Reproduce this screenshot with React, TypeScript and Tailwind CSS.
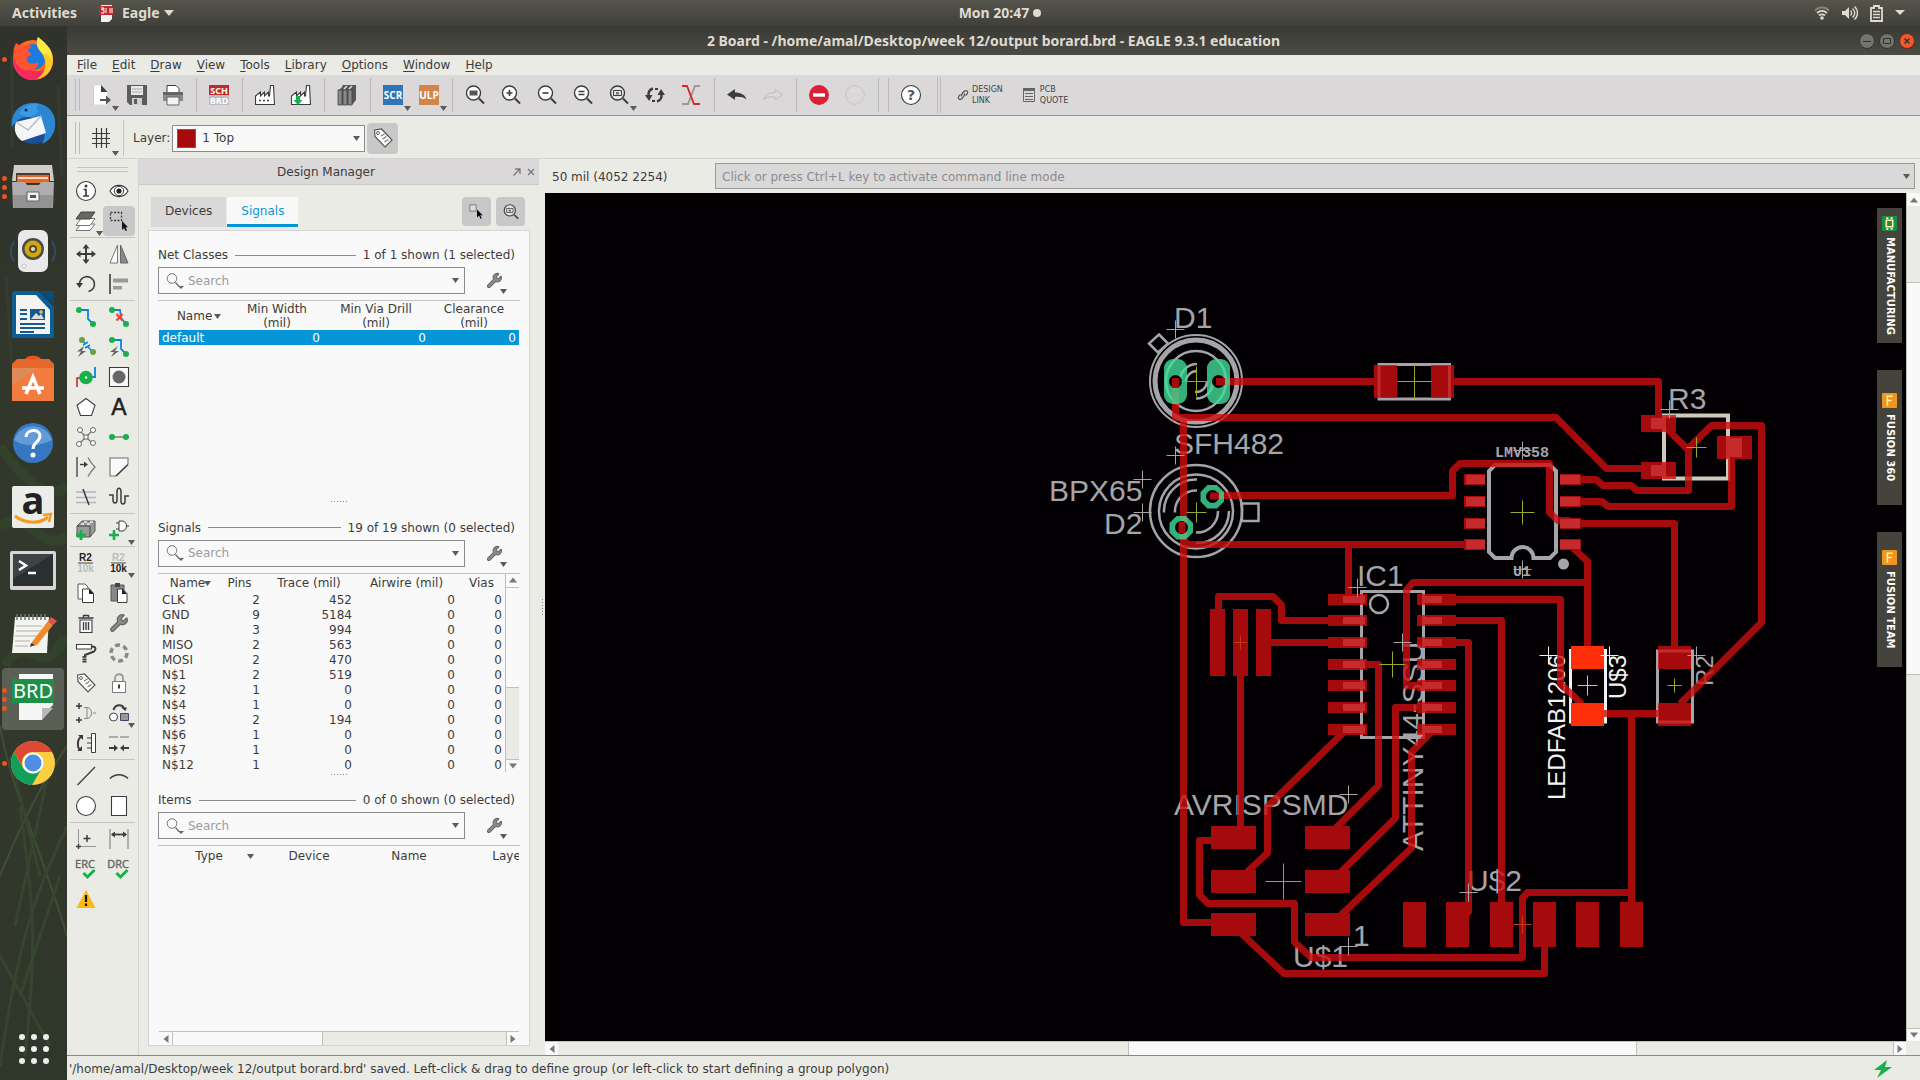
import { ReactNode, useState } from 'react';
import { Wrench } from 'lucide-react';

const INK = '#3c3c3c';
const GREEN = '#17b04b';

/* 20x20 tool glyphs */
const glyphs: Record<string, ReactNode> = {
    open: (
        <>
            <path d="M2 .5h8l6 6v13H2z" fill="#fff" stroke="none" />
            <path d="M10 0l6.500 7H10z" fill={INK} stroke="none" />
            <path d="M2.500 20V.5" stroke="#ccc" strokeWidth="1" />
            <path d="M9 14h6V10.500l5 4.500-5 4.500V16H9z" fill="#555" stroke="none" />
        </>
    ),
    save: (
        <>
            <path d="M0 0h20v20H3l-3-3z" fill="#5c5c5a" stroke="none" />
            <path d="M4 1h12v9H4z" fill="#e8e8e8" stroke="none" />
            <path d="M5 13h10v7H5z" fill="#cfcfcf" stroke="none" />
            <path d="M7 14h3v5H7z" fill="#5c5c5a" stroke="none" />
            <path d="M5 4h10M5 7h10" stroke="#aaa" strokeWidth="1" />
        </>
    ),
    print: (
        <>
            <path d="M4 .5h9l3 3V8H4z" fill="#fff" strokeWidth="1" />
            <path d="M0 7h20v9H0z" fill="#8a8a88" stroke="none" />
            <path d="M0 7h20v3H0z" fill="#666" stroke="none" />
            <path d="M4 12h12v8H4z" fill="#f4f4f4" stroke="#666" strokeWidth="1" />
        </>
    ),
    sch: (
        <>
            <path d="M0 0h20v10H0z" fill="#c4262b" stroke="none" />
            <path d="M0 10h20v10H0z" fill="#bdbdbd" stroke="none" />
            <g fontSize="9" fontWeight="bold" fill="#fff" stroke="none" textAnchor="middle" fontFamily="Open Sans">
                <text x="10" y="8.500">SCH</text>
                <text x="10" y="18.500">BRD</text>
            </g>
        </>
    ),
    cam: (
        <>
            <path d="M.5 19.500V11l5-4v4l4-4v4l4-4v4h1l1-10.500h3l1 19z" fill="#fff" strokeWidth="1.100" />
            <path d="M4 15.500h2M8 15.500h2M12 15.500h2" strokeWidth="1.300" />
        </>
    ),
    camDown: (
        <>
            <path d="M.5 19.500V11l5-4v4l4-4v4l4-4v4h1l1-10.500h3l1 19z" fill="#fff" strokeWidth="1.100" />
            <path d="M5 11h4v4h2.500L7 20l-4.500-5H5z" fill={GREEN} stroke="none" />
        </>
    ),
    library: (
        <>
            <path d="M1 5l5-5h13v15l-4 5H1z" fill="#555" stroke="none" />
            <path d="M1 5h4v15H1zM6 5h4v15H6zM11 5h4v15h-4z" fill="#888" stroke="#444" strokeWidth="0.800" />
            <path d="M2 4l3-3M7 4l3-3M12 4l3-3" stroke="#ddd" strokeWidth="1.500" />
        </>
    ),
    scr: (
        <>
            <path d="M0 0h20v20H0z" fill="#2f75b8" stroke="none" />
            <text x="10" y="14" textAnchor="middle" fontSize="10" fontWeight="bold" fill="#fff" stroke="none" fontFamily="Open Sans">SCR</text>
        </>
    ),
    ulp: (
        <>
            <path d="M0 0h20v20H0z" fill="#d38448" stroke="none" />
            <text x="10" y="14" textAnchor="middle" fontSize="10" fontWeight="bold" fill="#fff" stroke="none" fontFamily="Open Sans">ULP</text>
        </>
    ),
    zoomFit: (
        <>
            <circle cx="8.500" cy="8" r="7" fill="#fff" strokeWidth="1.400" />
            <path d="M4.500 5.500h8v5h-8z" fill="#555" stroke="none" />
            <path d="M14 13.500l5 5" strokeWidth="2" />
        </>
    ),
    zoomIn: (
        <>
            <circle cx="8.500" cy="8" r="7" fill="#fff" strokeWidth="1.400" />
            <path d="M5.500 8h6M8.500 5v6" strokeWidth="1.600" />
            <path d="M14 13.500l5 5" strokeWidth="2" />
        </>
    ),
    zoomOut: (
        <>
            <circle cx="8.500" cy="8" r="7" fill="#fff" strokeWidth="1.400" />
            <path d="M5.500 8h6" strokeWidth="1.600" />
            <path d="M14 13.500l5 5" strokeWidth="2" />
        </>
    ),
    zoomRedraw: (
        <>
            <circle cx="8.500" cy="8" r="7" fill="#fff" strokeWidth="1.400" />
            <path d="M5.500 6.500h6M5.500 9.500h6" strokeWidth="1.400" />
            <path d="M14 13.500l5 5" strokeWidth="2" />
        </>
    ),
    zoomSelect: (
        <>
            <circle cx="8.500" cy="8" r="7" fill="#e4e4e4" strokeWidth="1.400" />
            <path d="M4.500 5.500h8v5h-8z" strokeWidth="1" />
            <path d="M7 7h3v2.500H7z" fill="#777" stroke="none" />
            <path d="M14 13.500l5 5" strokeWidth="2" />
        </>
    ),
    refresh: (
        <>
            <path d="M8 3.500C4.500 4.500 3 7.500 3.500 11.500M12 16.500c3.500-1 5-4 4.500-8" strokeWidth="2.400" />
            <path d="M0 10h7.500L4 16zM20 10h-7.500L16 4z" fill={INK} stroke="none" />
            <path d="M10 4h3M7 16h3" strokeWidth="2" />
        </>
    ),
    ratsnest: (
        <>
            <path d="M19 1h-5L7 19H1" stroke="#999" strokeWidth="1.800" />
            <path d="M1 1h5l7 18h6" stroke="#d8262c" strokeWidth="1.800" />
        </>
    ),
    undo: <path d="M0 9.500L8 4v3.500c6 0 10 2 11.500 7-3-2.500-7-3-11.500-2.500v3z" fill={INK} stroke="none" />,
    redo: <path d="M19.500 9.500L12 4.500v3C6 7.500 2 9.500.5 14.500c3-2.500 7-3 11.500-2.500v3z" stroke="#bcbcbc" strokeWidth="1" />,
    stop: (
        <>
            <circle cx="10" cy="10" r="10" fill="#db2035" stroke="none" />
            <path d="M4 10h12" stroke="#fff" strokeWidth="3.400" />
        </>
    ),
    idle: (
        <>
            <circle cx="10" cy="10" r="9.300" stroke="#c6c6c6" strokeWidth="1" />
            <path d="M8 6h1M12 6h1M8 13h1M12 13h1" stroke="#eee" strokeWidth="1" />
        </>
    ),
    help: (
        <>
            <circle cx="10" cy="10" r="9.500" fill="#fff" strokeWidth="1.100" />
            <text x="10" y="15" textAnchor="middle" fontSize="14" fontWeight="bold" fill="#555" stroke="none">?</text>
        </>
    ),
    grid: <path d="M5.500 0v20M10.500 0v20M15.500 0v20M1 5.500h18M1 10.500h18M1 15.500h18" strokeWidth="1.200" />,
    tag: (
        <>
            <path d="M1.500 2l7-1L19 12l-7 7L2 8.500z" fill="#fff" stroke="#555" strokeWidth="1.200" />
            <circle cx="5" cy="5" r="1.500" stroke="#666" strokeWidth="1" />
            <path d="M8 8l3.500-2M9.500 11l4-2.500M11.500 14l4-2.500" stroke="#777" strokeWidth="1.200" />
        </>
    ),
    info: (
        <>
            <circle cx="10" cy="10" r="9.500" fill="#fff" strokeWidth="1.100" />
            <path d="M7.500 8.500H10V15M7 15h6" strokeWidth="1.700" />
            <circle cx="10" cy="5" r="1.500" fill={INK} stroke="none" />
        </>
    ),
    eye: (
        <>
            <path d="M1 10c4-7.500 14-7.500 18 0-4 7.500-14 7.500-18 0z" fill="#fff" strokeWidth="1.100" />
            <circle cx="10" cy="10" r="4.700" strokeWidth="1" />
            <circle cx="10" cy="10" r="2.600" fill="#222" stroke="none" />
        </>
    ),
    layers: (
        <>
            <path d="M5 13h14l-5 6.500H0z" fill="#fff" stroke="#777" strokeWidth="1" />
            <path d="M5 7.500h14l-5 7H0z" fill="#fff" stroke="#777" strokeWidth="1" />
            <path d="M5 1h14l-5 7H0z" fill="#666" stroke="#444" strokeWidth="1" />
        </>
    ),
    group: (
        <>
            <path d="M1.500 1.500h11v8h-11z" strokeWidth="1.300" strokeDasharray="2 1.500" />
            <path d="M13 10v9l2-2 1.500 3 1.500-.7-1.500-3H19z" fill="#111" stroke="none" />
        </>
    ),
    move: (
        <>
            <path d="M10 2v16M2 10h16" strokeWidth="2" />
            <path d="M10 0l3.500 4.500h-7zM10 20l3.500-4.500h-7zM0 10l4.500-3.500v7zM20 10l-4.500-3.500v7z" fill={INK} stroke="none" />
        </>
    ),
    mirror: (
        <>
            <path d="M8.500 1v18H1z" fill="#fff" stroke="#777" strokeWidth="1" />
            <path d="M11.500 1v18H19z" fill="#888" stroke="#666" strokeWidth="1" />
        </>
    ),
    rotate: (
        <>
            <path d="M3.500 11a7.500 7.500 0 1 1 9 6.500" strokeWidth="1.600" />
            <path d="M0 9h7l-3.500 5z" fill={INK} stroke="none" />
        </>
    ),
    align: (
        <>
            <path d="M1 0v20" strokeWidth="1.600" />
            <path d="M4 4.500h15v4H4zM4 12h9v3.500H4z" fill="#999" stroke="none" />
        </>
    ),
    route: (
        <>
            <path d="M3 3h9v9l5 5" stroke="#0a84e0" strokeWidth="1.800" />
            <circle cx="3" cy="3" r="3" fill={GREEN} stroke="none" />
            <circle cx="17" cy="17" r="3" fill={GREEN} stroke="none" />
        </>
    ),
    ripup: (
        <>
            <path d="M3 3h8l1 8 5 6" stroke="#0a84e0" strokeWidth="1.800" />
            <circle cx="3" cy="3" r="3" fill={GREEN} stroke="none" />
            <circle cx="17" cy="17" r="3" fill={GREEN} stroke="none" />
            <path d="M7.500 7l6 6.500M13.500 7l-6 6.500" stroke="#ff3b28" strokeWidth="2.200" />
        </>
    ),
    fanout: (
        <>
            <path d="M5 2l4 4.500M12 10l5 5M7 8l5-3M9 11l5-3" stroke="#0a84e0" strokeWidth="1.600" />
            <circle cx="6" cy="3" r="3" fill="#6d9e45" stroke="none" />
            <circle cx="17" cy="15" r="3" fill="#6d9e45" stroke="none" />
            <path d="M8 9l-7 5.500h4L2 20l8-6H6z" fill="#666" stroke="none" />
        </>
    ),
    autoroute: (
        <>
            <path d="M3 3h9v9l5 5" stroke="#0a84e0" strokeWidth="1.800" />
            <circle cx="3" cy="3" r="3" fill={GREEN} stroke="none" />
            <circle cx="17" cy="17" r="3" fill={GREEN} stroke="none" />
            <path d="M9 9l-8 6h4l-3 5 8-6H6z" fill="#666" stroke="none" />
        </>
    ),
    via: (
        <>
            <path d="M1 20V11h6" stroke="#b5282c" strokeWidth="1.500" />
            <path d="M19 0v10h-5" stroke="#0a84e0" strokeWidth="1.800" />
            <circle cx="10" cy="10.500" r="6.800" fill={GREEN} stroke="none" />
            <circle cx="10" cy="10.500" r="1.200" fill="#fff" stroke="none" />
        </>
    ),
    hole: (
        <>
            <path d="M.5 .5h19v19H.5z" fill="#fafafa" strokeWidth="1.100" />
            <circle cx="10" cy="10" r="6.500" fill="#666" stroke="none" />
        </>
    ),
    polygon: <path d="M10 1.500l9 6.700-3.500 10.300h-11L1 8.200z" fill="#fff" strokeWidth="1.100" />,
    text: <text x="10" y="18" textAnchor="middle" fontSize="23" fill="#222" stroke="#222" strokeWidth="0.500" fontFamily="Liberation Sans">A</text>,
    star: (
        <>
            <path d="M4 4l12 12M16 4L4 16" stroke="#777" strokeWidth="1.300" />
            <g fill="#fff" stroke="#666" strokeWidth="1">
                <circle cx="4" cy="3" r="2.500" />
                <circle cx="17" cy="3" r="2.500" />
                <circle cx="3" cy="17" r="2.500" />
                <circle cx="17" cy="16" r="2.500" />
                <path d="M8 8h4v4H8z" />
            </g>
        </>
    ),
    airwire: (
        <>
            <path d="M3 10h14" stroke="#888" strokeWidth="1.600" />
            <circle cx="3" cy="10" r="3" fill={GREEN} stroke="none" />
            <circle cx="17" cy="10" r="3" fill={GREEN} stroke="none" />
        </>
    ),
    split: (
        <>
            <path d="M1 0v20" strokeWidth="1.300" />
            <path d="M12 .5c2 4 4 7 7 9.500-3 3-5 6-7 9.500" stroke="#777" strokeWidth="1.300" />
            <path d="M4 7.500h6" strokeWidth="1.400" />
            <path d="M8 4.500l4 3-4 3z" fill={INK} stroke="none" />
        </>
    ),
    miter: (
        <>
            <path d="M1 1h18v7L7 19H1z" fill="#fafafa" stroke="none" />
            <path d="M19 7V1H1v18h6" stroke="#999" strokeWidth="1.600" />
            <path d="M19 7.500L7 19" strokeWidth="1.600" />
        </>
    ),
    slice: (
        <>
            <path d="M0 5h20M0 10.500h20M0 15.500h20" stroke="#b5b3c0" strokeWidth="1.300" />
            <path d="M7 2l6 16" strokeWidth="1.500" />
        </>
    ),
    meander: <path d="M0 8h4v5c0 4 4 4 4 0V5c0-5 4-5 4 0v9c0 4 4 4 4 0V9h4" strokeWidth="1.500" />,
    addPart: (
        <>
            <path d="M1 6l5-5h13v10l-5 6H1z" fill="#999" stroke="#555" strokeWidth="1" />
            <path d="M1 6h13v11" stroke="#444" strokeWidth="1" />
            <path d="M5 4h3M11 4h3M8 2h3M14 2h3" stroke="#eee" strokeWidth="1.400" />
            <path d="M5 10v10M0 15h10" stroke={GREEN} strokeWidth="2.800" />
        </>
    ),
    addGate: (
        <>
            <path d="M10 1h3c6 0 6 10 0 10h-3zM7 3h3M7 9h3M17 6h3" fill="#fff" strokeWidth="1" />
            <path d="M5 10v10M0 15h10" stroke={GREEN} strokeWidth="2.600" />
        </>
    ),
    nameTag: (
        <>
            <text x="9.500" y="8" textAnchor="middle" fontSize="10" fontWeight="bold" fill="#222" stroke="none" fontFamily="Liberation Sans">R2</text>
            <path d="M2 10h15" stroke="#444" strokeWidth="1" />
            <text x="9.500" y="19" textAnchor="middle" fontSize="10" fontWeight="bold" fill="#bbb" stroke="none" fontFamily="Liberation Sans">10k</text>
        </>
    ),
    valueTag: (
        <>
            <text x="9.500" y="8" textAnchor="middle" fontSize="10" fontWeight="bold" fill="#bbb" stroke="none" fontFamily="Liberation Sans">R2</text>
            <path d="M2 10h15" stroke="#444" strokeWidth="1" />
            <text x="9.500" y="19" textAnchor="middle" fontSize="10" fontWeight="bold" fill="#222" stroke="none" fontFamily="Liberation Sans">10k</text>
        </>
    ),
    copy: (
        <>
            <path d="M2 1h7l3 3v12H2z" fill="#fff" stroke="#555" strokeWidth="1" />
            <path d="M6.500 6h7l4 4.500v9h-11z" fill="#fff" strokeWidth="1" />
            <path d="M13 5.500l5 5.500h-5z" fill="#222" stroke="none" />
        </>
    ),
    paste: (
        <>
            <path d="M2 2h13v16H2z" fill="#888" stroke="#555" strokeWidth="1" />
            <path d="M6 0h5v4H6z" fill="#444" stroke="none" />
            <path d="M8.500 6h5l4.500 4.500v9H8.500z" fill="#fff" strokeWidth="1" />
            <path d="M13 5.500l5 5.500h-5z" fill="#222" stroke="none" />
        </>
    ),
    trash: (
        <>
            <path d="M2.500 5h15M7.500 5V2.500h5V5" strokeWidth="1.300" />
            <path d="M4 7h12v12.500H4z" fill="#fff" strokeWidth="1.100" />
            <path d="M7.500 9v8M10 9v8M12.500 9v8" strokeWidth="1.400" />
        </>
    ),
    roller: (
        <>
            <path d="M.5 1.500h15V6H.5z" fill="#fff" strokeWidth="1.100" />
            <path d="M16 3.500c4 0 4.500 3 2 5L9 12v1" strokeWidth="2" />
            <path d="M8.500 13v7" strokeWidth="4" strokeDasharray="1.800 .6" />
        </>
    ),
    optimize: <circle cx="10" cy="10" r="8" stroke="#888" strokeWidth="3.500" strokeDasharray="5 3.370" />,
    lock: (
        <>
            <path d="M6 9V5c0-5 8-5 8 0v4" stroke="#999" strokeWidth="1.800" />
            <path d="M3.500 8.500h13v11h-13z" fill="#fff" stroke="#777" strokeWidth="1" />
            <path d="M10 11.500v4" strokeWidth="2" />
        </>
    ),
    pinswap: (
        <>
            <path d="M8 4.500h3c6 0 6 11 0 11H8M11 5v10M17 10h3" stroke="#888" strokeWidth="1" />
            <path d="M3 0v6M0 3h6M3 14v6M0 17h6" strokeWidth="1.500" />
        </>
    ),
    replace: (
        <>
            <path d="M4.500 7C6 1 13 1 15 5" strokeWidth="2" />
            <path d="M12 4.500h6L16.500 8z" fill={INK} stroke="none" />
            <circle cx="4.500" cy="14" r="4" fill="#fff" strokeWidth="1" />
            <path d="M11.500 10.500h8v7h-8z" fill="#999" stroke="#446" strokeWidth="1" />
        </>
    ),
    gateswap: (
        <>
            <path d="M6 4C1 4 1 15 4 16.500" strokeWidth="2" />
            <path d="M2 2h5v5zM1 18h5v-5z" fill={INK} stroke="none" />
            <path d="M15.500 .5h4v19h-4z" fill="#fff" strokeWidth="1" />
            <path d="M11 5h4M11 10h4M11 15h4" strokeWidth="1.200" />
        </>
    ),
    join: (
        <>
            <path d="M0 4h9M11 4h9" stroke="#999" strokeWidth="1.600" />
            <path d="M0 15h6M14 15h6" strokeWidth="1.800" />
            <path d="M5 11.500L9 15l-4 3.500zM15 11.500L11 15l4 3.500z" fill={INK} stroke="none" />
        </>
    ),
    line: <path d="M1.500 19L19 1" strokeWidth="1.300" />,
    arc: <path d="M1 12.500c5-5 13-5 18 0" strokeWidth="1.500" />,
    circle: <circle cx="10" cy="10" r="9.500" fill="#fff" strokeWidth="1.100" />,
    rect: <path d="M2.500 .5h15v19h-15z" fill="#fff" strokeWidth="1.100" />,
    mark: (
        <>
            <path d="M2.500 0v18M3 17.500h17" stroke="#999" strokeWidth="1" />
            <path d="M11 6v7M7.500 9.500h7M2.500 15v5M0 17.500h5" strokeWidth="1.500" />
        </>
    ),
    dimension: (
        <>
            <path d="M1 0v20M19 0v20" stroke="#888" strokeWidth="1.200" />
            <path d="M3 5.500h14" strokeWidth="1.800" />
            <path d="M2 5.500l4-3v6zM18 5.500l-4-3v6z" fill={INK} stroke="none" />
        </>
    ),
    erc: (
        <>
            <text x="9" y="9" textAnchor="middle" fontSize="11" fill="#666" stroke="#666" strokeWidth="0.400" fontFamily="Open Sans">ERC</text>
            <path d="M7.500 14l4 4 7-7" stroke={GREEN} strokeWidth="3" />
        </>
    ),
    drc: (
        <>
            <text x="9" y="9" textAnchor="middle" fontSize="11" fill="#666" stroke="#666" strokeWidth="0.400" fontFamily="Open Sans">DRC</text>
            <path d="M7.500 14l4 4 7-7" stroke={GREEN} strokeWidth="3" />
        </>
    ),
    warning: (
        <>
            <path d="M10 1l9.500 18H.5z" fill="#fdb813" stroke="none" />
            <path d="M10 6v7M10 14.500v2.500" stroke="#111" strokeWidth="2.200" />
        </>
    ),
    pick: (
        <>
            <path d="M1 1h8v8H1z" fill="#ddd" stroke="#777" strokeWidth="1.200" />
            <path d="M10 7v10l2.500-2.500 2 4 1.500-.8-2-3.700H17z" fill="#000" stroke="none" />
        </>
    ),
};

function Glyph({ name, size = 20 }: { name: string; size?: number }) {
    return (
        <svg width={size} height={size} viewBox="0 0 20 20" fill="none" stroke={INK} className="shrink-0 overflow-visible" aria-hidden="true">
            {name === 'wrench' ? <Wrench size={20} fill="#8c8c8c" stroke="#666" strokeWidth={1.5} /> : glyphs[name]}
        </svg>
    );
}

function Caret({ className = '' }: { className?: string }) {
    return (
        <svg width="7" height="5" viewBox="0 0 7 5" className={`shrink-0 ${className}`} aria-hidden="true">
            <path d="M0 0h7L3.500 5z" fill="#5a5a5a" />
        </svg>
    );
}

/* ---------- desktop ---------- */

function TopBar() {
    return (
        <header className="h-[26px] shrink-0 grid grid-cols-3 items-center px-3 bg-linear-to-b from-[#56554c] to-[#403f39] text-[#dfdbd2] font-['Noto_Sans',sans-serif] text-[14px] leading-5 font-bold">
            <div className="flex items-center gap-[22px]">
                <button>Activities</button>
                <button className="flex items-center gap-2">
                    <svg width="15" height="17" viewBox="0 0 15 17" aria-hidden="true">
                        <path d="M2 0h11v14l-3 3H2z" fill="#f2f2f2" />
                        <path d="M0 1h14v9H0z" fill="#c4262b" />
                        <path d="M2 3h3v1H3v1h2v3H2M7 3v5M11 3v5M13 3v5" stroke="#fff" fill="none" />
                    </svg>
                    Eagle
                    <svg width="10" height="6" viewBox="0 0 10 6" className="-ml-1" aria-hidden="true"><path d="M0 0h10L5 6z" fill="#dfdbd2" /></svg>
                </button>
            </div>
            <button className="flex items-center justify-center gap-1 pl-20">
                Mon 20:47 <span className="size-2 rounded-full bg-[#dfdbd2]" />
            </button>
            <div className="flex items-center justify-end gap-3 pr-[3px]">
                <svg width="16" height="14" viewBox="0 0 16 14" fill="none" stroke="#dfdbd2" aria-hidden="true">
                    <path d="M1 4.500c4-4 10-4 14 0" stroke="#85827a" strokeWidth="1.800" />
                    <path d="M3 7c3-2.500 7-2.500 10 0M5 9.500c2-1.500 4-1.500 6 0" strokeWidth="1.800" />
                    <circle cx="8" cy="12" r="1.800" fill="#dfdbd2" stroke="none" />
                </svg>
                <svg width="16" height="14" viewBox="0 0 16 14" fill="none" stroke="#dfdbd2" strokeWidth="1.400" aria-hidden="true">
                    <path d="M0 5h3l4-4v12L3 9H0z" fill="#dfdbd2" stroke="none" />
                    <path d="M8.500 4.500c1.500 1.500 1.500 3.500 0 5M10.500 2.500c3 2.500 3 6.500 0 9M12.500 .5c4 3.500 4 9.500 0 13" />
                </svg>
                <svg width="13" height="17" viewBox="0 0 13 17" fill="none" stroke="#dfdbd2" aria-hidden="true">
                    <path d="M4 3V1h5v2h3v13H1V3z" strokeWidth="1.800" />
                    <path d="M3 6.500h7M3 9.500h7M3 12.500h7" strokeWidth="1.600" />
                </svg>
                <svg width="10" height="6" viewBox="0 0 10 6" aria-hidden="true"><path d="M0 0h10L5 5z" fill="#dfdbd2" /></svg>
            </div>
        </header>
    );
}

const launchers: { name: string; pips?: number; active?: boolean; art: ReactNode }[] = [
    {
        name: 'Firefox',
        pips: 1,
        art: (
            <>
                <circle cx="22" cy="23" r="20" fill="#ff6a1f" />
                <path d="M3 17c-3 12 4 26 19 26 12 0 21-9 20-22-3 9-10 14-18 13C13 33 6 26 3 17z" fill="#f5295c" />
                <circle cx="22" cy="20" r="13" fill="#1d7be0" />
                <path d="M5 6c3 2 5 3 8 3 3-1 6-1 8 0-3 1-4 4-4 6 2 0 3 1 3 3-3 1-5 3-4 6 3 4 8 3 11 1 2 5-5 10-13 8C4 30-1 17 5 6z" fill="#ff5430" />
                <path d="M27 0c2 4 16 9 15 24-1 11-8 17-16 18 8-6 11-14 6-24-4-6-8-9-5-18z" fill="#ffc928" />
                <path d="M27 0c8 6 14 12 13 22-3-6-6-6-8-5-5-5-8-9-5-17z" fill="#ffea45" />
            </>
        ),
    },
    {
        name: 'Thunderbird',
        art: (
            <>
                <circle cx="23" cy="23" r="20" fill="#1b4f93" />
                <path d="M1 26C-1 12 9 1 24 2c14 1 22 11 20 24-1 8-6 14-13 17 5-9 3-19-4-23C20 14 8 14 1 26z" fill="#2b86d3" />
                <path d="M5 21l25-6 5 17-24 8C5 36 2 29 5 21z" fill="#f5f6f8" />
                <path d="M5 21l12 8 13-14" fill="none" stroke="#b8bec7" strokeWidth="1.500" />
                <path d="M8 12C14 3 22 2 28 3c-3 3-3 5-1 7-5 7-12 8-19 2z" fill="#3c9ae4" />
                <circle cx="15" cy="9" r="1.500" fill="#123" />
            </>
        ),
    },
    {
        name: 'Files',
        pips: 3,
        art: (
            <>
                <path d="M3 0h38l2 16H1z" fill="#cfcdca" />
                <path d="M5 8h34v9H5z" fill="#4a3a31" />
                <path d="M6 10h32v8H6z" fill="#e2672c" />
                <path d="M7 12h30v2H7z" fill="#f7d9bd" />
                <path d="M1 17h13l2 3h12l2-3h13l-1 26H2z" fill="#aeadab" />
                <path d="M2 30h40l-.5 13h-39z" fill="#949391" />
                <path d="M16 27h12v9H16z" fill="#f0f0f0" stroke="#666" />
                <path d="M19 30h6v3h-6z" fill="#555" />
            </>
        ),
    },
    {
        name: 'Rhythmbox',
        art: (
            <>
                <path d="M3 12c-4 7-4 14 0 20M41 12c4 7 4 14 0 20" stroke="#344a6b" fill="none" strokeWidth="2" />
                <rect x="7" y="1" width="30" height="42" rx="7" fill="#e9e9e9" />
                <circle cx="22" cy="20" r="11" fill="#4a4a48" />
                <circle cx="22" cy="20" r="8.500" fill="#cda715" />
                <circle cx="22" cy="20" r="4" fill="#5a4c10" />
                <circle cx="22" cy="20" r="2" fill="#ddd" />
                <circle cx="13" cy="37" r="2" fill="#fff" stroke="#bbb" />
            </>
        ),
    },
    {
        name: 'LibreOffice Writer',
        art: (
            <>
                <path d="M3-2h24l16 16v31H1V0z" fill="#0b5f96" />
                <path d="M27-2h16v14z" fill="#0c4a78" />
                <path d="M5 2h20l14 15v24H5z" fill="#f4f4f2" />
                <path d="M9 17h7M9 21h7M9 26h7M9 31h25M9 35h25M9 39h14" stroke="#175a92" strokeWidth="2" />
                <path d="M19 16h15v11H19z" fill="#175a92" />
                <path d="M20 26l5-6 3 3 2-2 3 5z" fill="#ddd" />
                <circle cx="30" cy="19" r="1.800" fill="#f8c13a" />
            </>
        ),
    },
    {
        name: 'Ubuntu Software',
        art: (
            <>
                <path d="M15 10V4c0-5 14-5 14 0v6" fill="none" stroke="#e95420" strokeWidth="3" />
                <path d="M1 7h42v37H1z" fill="#f27b3e" />
                <path d="M1 7l5-5h32l5 5v4H1z" fill="#e7672b" />
                <path d="M1 11h26L1 28z" fill="#e08a57" />
                <path d="M15 37l7-17 7 17M11 31h22" fill="none" stroke="#fff" strokeWidth="3.500" />
            </>
        ),
    },
    {
        name: 'Help',
        art: (
            <>
                <circle cx="22" cy="22" r="20" fill="#3577c0" />
                <path d="M3 19a20 20 0 0 1 38 0c-11 6-27 8-38 0z" fill="#639bd6" />
                <path d="M15 16c0-8 14-9 14-1 0 6-7 6-7 13" fill="none" stroke="#fff" strokeWidth="3" />
                <circle cx="22" cy="34" r="2.500" fill="#fff" />
            </>
        ),
    },
    {
        name: 'Amazon',
        art: (
            <>
                <rect x="1" y="1" width="42" height="42" rx="2" fill="#ececea" />
                <text x="22" y="29" textAnchor="middle" fontSize="38" fontWeight="bold" fill="#222" fontFamily="Open Sans">a</text>
                <path d="M4 31c10 8 25 8 33 1" fill="none" stroke="#f79a1c" strokeWidth="3" />
                <path d="M32 30l8-1-2 8" fill="none" stroke="#f79a1c" strokeWidth="2.500" />
            </>
        ),
    },
    {
        name: 'Terminal',
        art: (
            <>
                <rect x="-1" y="2" width="46" height="39" rx="2" fill="#d8d6d3" />
                <path d="M2 5h40v32H2z" fill="#2a2f30" />
                <path d="M2 5h40L2 30z" fill="#3d4445" />
                <path d="M8 12l7 4.500L8 21" fill="none" stroke="#fff" strokeWidth="2.500" />
                <path d="M17 24h8" stroke="#fff" strokeWidth="2.500" />
            </>
        ),
    },
    {
        name: 'Text Editor',
        art: (
            <>
                <path d="M4 4h34l-2 36H1z" fill="#f3f3ef" />
                <path d="M6 1v6M10 1v6M14 1v6M18 1v6M22 1v6M26 1v6M30 1v6M34 1v6" stroke="#777" strokeWidth="1.500" />
                <path d="M5 13h26M5 18h25M4 23h25M4 28h15M4 33h13" stroke="#c9c9c4" strokeWidth="1.500" />
                <path d="M21 29L37 8l5 4-16 20-5 1z" fill="#f08a2c" />
                <path d="M37 8l3-4 6 4-4 4z" fill="#df5648" />
                <path d="M20 30l4 2-5 2z" fill="#333" />
            </>
        ),
    },
    {
        name: 'EAGLE Board',
        pips: 3,
        active: true,
        art: (
            <>
                <path d="M8-3h34v31l-11 11v4H8z" fill="#f5f5f5" />
                <path d="M31 43V31h11z" fill="#b9b9b9" />
                <path d="M1 2h42v24H1z" fill="#1d8f46" />
                <text x="22" y="21" textAnchor="middle" fontSize="20" fill="#fff" fontFamily="Noto Sans">BRD</text>
            </>
        ),
    },
    {
        name: 'Chrome',
        pips: 1,
        art: (
            <>
                <circle cx="22" cy="22" r="22" fill="#ffcd42" />
                <path d="M3 11A22 22 0 0 1 41 11H22A11 11 0 0 0 12 27z" fill="#dc4935" />
                <path d="M3 11a22 22 0 0 0 18 33l10-17A11 11 0 0 1 12 27z" fill="#11a05c" />
                <circle cx="22" cy="22" r="10.500" fill="#fff" />
                <circle cx="22" cy="22" r="8.500" fill="#4f8fe3" />
            </>
        ),
    },
];

function Launcher() {
    return (
        <nav className="relative w-[67px] shrink-0 flex flex-col justify-between bg-linear-to-b from-[#2f332b] via-[#33382c] to-[#2f372a] overflow-hidden" aria-label="Favourites">
            <svg viewBox="0 0 67 1054" preserveAspectRatio="none" className="absolute inset-0 size-full" fill="none" aria-hidden="true">
                <path d="M0 420c20 30 50 60 67 40M0 500c30-20 40 30 67 10M5 640c20-40 40 20 60-30" stroke="#33422b" strokeWidth="10" />
                <path d="M0 850c20-50 40-90 67-130M0 700c10 60 40 120 67 210" stroke="#3f4f33" strokeWidth="2" />
                <path d="M20 780c10 80 20 120 5 250M67 800C40 860 20 900 0 1040M10 730l30 120M50 740L15 900M60 850l-40 120M0 930l50 90" stroke="#374530" strokeWidth="3" />
                <path d="M12 30v90M58 60l4 90M6 250l6 90" stroke="#363c30" strokeWidth="3" />
            </svg>
            <ul className="relative pt-px">
                {launchers.map((app) => (
                    <li key={app.name} className="h-16 flex items-center">
                        <span className="w-[2px]" />
                        <button aria-label={app.name} className={`relative w-[62px] h-[62px] flex items-center justify-center rounded ${app.active ? 'bg-[#5b6056]' : ''}`}>
                            <span className="absolute left-0 flex flex-col gap-1">
                                {Array.from({ length: app.pips ?? 0 }, (_, i) => (
                                    <i key={i} className="size-[5px] rounded-full bg-[#e95420]" />
                                ))}
                            </span>
                            <svg width="44" height="44" viewBox="0 0 44 44" className="overflow-visible">{app.art}</svg>
                        </button>
                    </li>
                ))}
            </ul>
            <button aria-label="Show Applications" className="relative mx-auto mb-4 grid grid-cols-3 gap-x-[6px] gap-y-[6px]">
                {Array.from({ length: 9 }, (_, i) => (
                    <i key={i} className="size-[6px] rounded-full bg-[#f0f0ee]" />
                ))}
            </button>
        </nav>
    );
}

function TitleBar() {
    return (
        <div className="relative h-[29px] shrink-0 flex items-center justify-center bg-linear-to-b from-[#3a3a35] to-[#4c4b44] font-['Noto_Sans',sans-serif] text-[14px] leading-5 font-bold text-[#dfdbd2]">
            <h1>2 Board - /home/amal/Desktop/week 12/output borard.brd - EAGLE 9.3.1 education</h1>
            <div className="absolute right-[5px] flex gap-1">
                <button aria-label="Minimize" className="size-4 rounded-full bg-[#74736c] border border-[#33322e]">
                    <svg viewBox="0 0 14 14" stroke="#33322e"><path d="M3 7.500h8" /></svg>
                </button>
                <button aria-label="Restore" className="size-4 rounded-full bg-[#74736c] border border-[#33322e]">
                    <svg viewBox="0 0 14 14" fill="none" stroke="#33322e"><path d="M3.500 4.500h7v5h-7z" /></svg>
                </button>
                <button aria-label="Close" className="size-4 rounded-full bg-[#f1592a] border border-[#5a2c1c]">
                    <svg viewBox="0 0 14 14" stroke="#33322e" strokeWidth="1.500"><path d="M4.500 4.500l5 5M9.500 4.500l-5 5" /></svg>
                </button>
            </div>
        </div>
    );
}

/* ---------- toolbars ---------- */

const menus = ['File', 'Edit', 'Draw', 'View', 'Tools', 'Library', 'Options', 'Window', 'Help'];

function MenuBar() {
    return (
        <nav className="h-5 shrink-0 flex items-center gap-[15px] pl-[10px]">
            {menus.map((m) => (
                <button key={m}><span className="underline underline-offset-2">{m[0]}</span>{m.slice(1)}</button>
            ))}
        </nav>
    );
}

function Grip() {
    return <span className="w-[5px] h-8 mr-[3px] border-x border-[#bbb]" />;
}

// '|' is a separator, a trailing '+' adds a drop-down caret
const mainTools = ['open+', 'save', 'print', '|', 'sch', '|', 'cam', 'camDown', '|', 'library', '|', 'scr+', 'ulp+', '|', 'zoomFit', 'zoomIn', 'zoomOut', 'zoomRedraw', 'zoomSelect+', 'refresh', 'ratsnest', '|', 'undo', 'redo', '|', 'stop', 'idle', '|', '|', 'help'];

function MainToolbar() {
    return (
        <div className="h-[41px] shrink-0 flex items-center pl-2 bg-[#dad8d9] border-b border-[#999]">
            <Grip />
            {mainTools.map((t, i) => {
                if (t === '|') return <span key={i} className="w-[10px] h-[34px] flex justify-center"><i className="w-px bg-[#b9b9b9]" /></span>;
                const name = t.replace('+', '');
                return (
                    <button key={i} aria-label={name} className="relative w-9 h-9 flex items-center justify-center">
                        <Glyph name={name} />
                        {t.endsWith('+') && <Caret className="absolute bottom-[2px] right-0" />}
                    </button>
                );
            })}
            <span className="w-[4px] h-9 mx-2 border-x border-[#b9b9b9]" />
            <button className="flex items-center gap-[3px] ml-2 text-[8px] leading-[11px] text-left text-[#444] font-['DejaVu_Sans',sans-serif]">
                <svg width="12" height="12" viewBox="0 0 12 12" fill="none" stroke="#555" strokeWidth="1.200" aria-hidden="true">
                    <path d="M5 7.500C3.500 6 5 4.500 7 2.500s5 0 3 2.500L8.500 6.500M7 4.500c1.500 1.500 0 3-2 5s-5 0-3-2.500L3.500 5.500" />
                </svg>
                <span>DESIGN<br />LINK</span>
            </button>
            <button className="flex items-center gap-[5px] ml-5 text-[8px] leading-[11px] text-left text-[#444] font-['DejaVu_Sans',sans-serif]">
                <svg width="12" height="14" viewBox="0 0 12 14" fill="none" stroke="#666" aria-hidden="true">
                    <path d="M.5 .5h11v13H.5z" />
                    <path d="M0 1.500h12" strokeWidth="3" />
                    <path d="M2 5.500h8M2 8.500h8M2 11.500h8" />
                </svg>
                <span>PCB<br />QUOTE</span>
            </button>
        </div>
    );
}

function LayerBar() {
    return (
        <div className="h-[43px] shrink-0 flex items-center pl-2 pt-[2px] border-b border-[#d4d4d4]">
            <Grip />
            <button aria-label="Grid" className="relative w-9 h-9 flex items-center justify-center">
                <Glyph name="grid" />
                <Caret className="absolute bottom-0 right-0" />
            </button>
            <span className="w-px h-9 mx-1 bg-[#c4c4c4]" />
            <label htmlFor="layer" className="ml-[5px] mr-[2px]">Layer:</label>
            <div className="w-[193px] h-[27px] flex items-center bg-[#f9f9f9] border border-[#8c8c8c]">
                <i className="size-[19px] ml-1 bg-[#a50a0c] border border-[#c0393b]" />
                <select id="layer" className="appearance-none flex-1 pl-[6px] outline-none bg-transparent">
                    <option>1 Top</option>
                    <option>16 Bottom</option>
                </select>
                <Caret className="mr-1" />
            </div>
            <button aria-label="Layer labels" className="w-[31px] h-[31px] ml-[2px] flex items-center justify-center rounded-sm bg-[#c9c8c8]">
                <Glyph name="tag" />
            </button>
        </div>
    );
}

const sideGroups: string[][] = [
    ['info', 'eye', 'layers+', 'group'],
    ['move', 'mirror', 'rotate', 'align'],
    ['route', 'ripup', 'fanout', 'autoroute', 'via', 'hole', 'polygon', 'text', 'star', 'airwire', 'split', 'miter', 'slice', 'meander'],
    ['addPart', 'addGate+'],
    ['nameTag', 'valueTag+', 'copy', 'paste', 'trash', 'wrench', 'roller', 'optimize', 'tag', 'lock', 'pinswap', 'replace+', 'gateswap', 'join'],
    ['line', 'arc', 'circle', 'rect'],
    ['mark', 'dimension', 'erc', 'drc', 'warning'],
];

function SideTools() {
    return (
        <div className="w-[72px] shrink-0 px-[3px] border-r border-[#d4d4d4]">
            <div className="h-[17px] px-[7px] pt-2"><i className="block h-[5px] border-y border-[#c4c4c4]" /></div>
            {sideGroups.map((group, g) => (
                <div key={g} className="grid grid-cols-2 auto-rows-[30px] border-b-1 border-[#c4c4c4] pb-px mb-px last:border-b-0">
                    {group.map((t) => {
                        const name = t.replace('+', '');
                        return (
                            <button key={t} aria-label={name} className={`relative flex items-center justify-center rounded-sm ${name === 'group' ? 'bg-[#c9c8c8]' : ''}`}>
                                <Glyph name={name} />
                                {t.endsWith('+') && <Caret className="absolute bottom-0 right-0" />}
                            </button>
                        );
                    })}
                </div>
            ))}
        </div>
    );
}

/* ---------- design manager ---------- */

function Section({ title, count, children }: { title: string; count: string; children: ReactNode }) {
    return (
        <section className="flex-1 min-h-0 flex flex-col pt-4 overflow-hidden">
            <div className="h-4 flex items-center gap-[7px] pr-[5px]">
                <h2>{title}</h2>
                <i className="flex-1 h-px bg-[#8c8c8c]" />
                <span>{count}</span>
            </div>
            <div className="mt-1 flex items-center shrink-0">
                <div className="w-[307px] h-[27px] flex items-center pl-[7px] pr-[5px] bg-[#f9f9f9] border border-[#8c8c8c]">
                    <svg width="19" height="18" viewBox="0 0 19 18" fill="none" stroke="#777" aria-hidden="true">
                        <circle cx="6" cy="6.500" r="4.800" />
                        <path d="M9.500 10.500l3.500 4" strokeWidth="1.500" />
                        <path d="M12 14h6l-3 3z" fill="#666" stroke="none" />
                    </svg>
                    <input aria-label={`Search ${title}`} placeholder="Search" className="flex-1 pl-[3px] outline-none placeholder:text-[#9c9c9c]" />
                    <Caret />
                </div>
                <button aria-label={`${title} settings`} className="relative ml-[18px] w-7 h-[27px] flex items-center pl-[3px]">
                    <Wrench size={17} fill="#8c8c8c" stroke="#666" strokeWidth={1.5} />
                    <Caret className="absolute bottom-0 right-1" />
                </button>
            </div>
            <div className="mt-[6px] flex-1 min-h-0 flex flex-col border-t border-[#c4c4c4] px-px">{children}</div>
        </section>
    );
}

function Splitter({ vertical = false }: { vertical?: boolean }) {
    return (
        <div className={`shrink-0 flex items-center justify-center gap-[2px] ${vertical ? 'w-[6px] flex-col' : 'h-1'}`}>
            {Array.from({ length: 6 }, (_, i) => <i key={i} className="size-px bg-[#888]" />)}
        </div>
    );
}

const signals: [string, number, number][] = [
    ['CLK', 2, 452], ['GND', 9, 5184], ['IN', 3, 994], ['MISO', 2, 563], ['MOSI', 2, 470], ['N$1', 2, 519],
    ['N$2', 1, 0], ['N$4', 1, 0], ['N$5', 2, 194], ['N$6', 1, 0], ['N$7', 1, 0], ['N$12', 1, 0],
];

function DesignManager() {
    const [tab, setTab] = useState('Signals');

    return (
        <aside className="w-[400px] shrink-0 flex flex-col">
            <div className="h-[26px] shrink-0 flex items-center bg-[#dad8d9] border-b border-[#c9c9c9]">
                <h2 className="flex-1 text-center">Design Manager</h2>
                <button aria-label="Float" className="w-[14px]">
                    <svg width="8" height="8" viewBox="0 0 8 8" fill="none" stroke="#777" strokeWidth="1.300"><path d="M.5 7.500l6-6M2 1h5v5" /></svg>
                </button>
                <button aria-label="Close panel" className="w-[12px]">
                    <svg width="8" height="8" viewBox="0 0 8 8" fill="none" stroke="#777" strokeWidth="1.300"><path d="M1 1l6 6M7 1L1 7" /></svg>
                </button>
            </div>
            <div className="flex-1 min-h-0 flex flex-col px-[9px] pt-3 pb-[9px]">
                <div className="h-[33px] shrink-0 flex items-start gap-px pl-[3px] pr-[5px]" role="tablist">
                    {['Devices', 'Signals'].map((t) => (
                        <button
                            key={t}
                            role="tab"
                            aria-selected={tab === t}
                            onClick={() => setTab(t)}
                            className={`h-[30px] px-[14px] border-b-3 ${tab === t ? 'bg-[#f9f9f9] text-[#0696d7] border-[#0696d7]' : 'bg-[#dad8d9] border-[#dad8d9]'}`}
                        >
                            {t}
                        </button>
                    ))}
                    <span className="flex-1" />
                    <button aria-label="Select in board" className="w-[29px] h-[29px] mr-1 flex items-center justify-center rounded-sm bg-[#c9c8c8]"><Glyph name="pick" size={16} /></button>
                    <button aria-label="Zoom to selection" className="w-[29px] h-[29px] flex items-center justify-center rounded-sm bg-[#c9c8c8]"><Glyph name="zoomSelect" size={16} /></button>
                </div>

                <div className="flex-1 min-h-0 flex flex-col px-[9px] bg-[#f9f9f9] border border-[#d4d4d4]">
                    <Section title="Net Classes" count="1 of 1 shown (1 selected)">
                        <table className="w-full table-fixed leading-[14px]">
                            <colgroup><col className="w-[72px]" /><col className="w-[92px]" /><col className="w-[106px]" /><col /></colgroup>
                            <thead>
                                <tr className="h-[29px]">
                                    <th className="font-normal pl-2 whitespace-nowrap">Name <Caret className="inline -ml-[2px]" /></th>
                                    <th className="font-normal">Min Width<br />(mil)</th>
                                    <th className="font-normal">Min Via Drill<br />(mil)</th>
                                    <th className="font-normal">Clearance<br />(mil)</th>
                                </tr>
                            </thead>
                            <tbody>
                                <tr className="h-[15px] bg-[#0696d7] text-white text-right">
                                    <td className="text-left pl-[3px]">default</td>
                                    <td className="pr-[3px]">0</td>
                                    <td className="pr-[3px]">0</td>
                                    <td className="pr-[3px]">0</td>
                                </tr>
                            </tbody>
                        </table>
                    </Section>
                    <Splitter />
                    <Section title="Signals" count="19 of 19 shown (0 selected)">
                        <div className="flex min-h-0">
                            <table className="flex-1 table-fixed leading-[15px]">
                                <colgroup><col className="w-[57px]" /><col className="w-[47px]" /><col className="w-[92px]" /><col className="w-[103px]" /><col className="w-[47px]" /></colgroup>
                                <thead>
                                    <tr className="h-[19px]">
                                        <th className="relative font-normal pt-px">Name<Caret className="absolute right-[5px] top-[7px]" /></th>
                                        <th className="font-normal pt-px">Pins</th>
                                        <th className="font-normal pt-px">Trace (mil)</th>
                                        <th className="font-normal pt-px">Airwire (mil)</th>
                                        <th className="font-normal pt-px">Vias</th>
                                    </tr>
                                </thead>
                                <tbody>
                                    {signals.map(([name, pins, trace]) => (
                                        <tr key={name} className="h-[15px] text-right">
                                            <td className="text-left pl-[3px]">{name}</td>
                                            <td className="pr-[3px]">{pins}</td>
                                            <td className="pr-[3px]">{trace}</td>
                                            <td className="pr-[3px]">0</td>
                                            <td className="pr-[3px]">0</td>
                                        </tr>
                                    ))}
                                </tbody>
                            </table>
                            <ScrollBar before={0} thumb={58} after={42} vertical />
                        </div>
                    </Section>
                    <Splitter />
                    <Section title="Items" count="0 of 0 shown (0 selected)">
                        <div className="flex-1 overflow-hidden">
                            <table className="w-[400px] table-fixed">
                                <thead>
                                    <tr className="h-5">
                                        <th className="relative font-normal">Type<Caret className="absolute right-[5px] top-2" /></th>
                                        <th className="font-normal">Device</th>
                                        <th className="font-normal">Name</th>
                                        <th className="font-normal">Layer</th>
                                    </tr>
                                </thead>
                            </table>
                        </div>
                        <ScrollBar before={0} thumb={45} after={55} />
                    </Section>
                </div>
            </div>
        </aside>
    );
}

/* before / thumb / after are shares of the track */
function ScrollBar({ before, thumb, after, vertical = false }: { before: number; thumb: number; after: number; vertical?: boolean }) {
    return (
        <div className={`shrink-0 flex border-[#c2bfbb] bg-[#ebebe6] ${vertical ? 'w-[14px] flex-col border-l' : 'h-[14px] border-t'}`}>
            <button aria-label="Scroll back" className={`shrink-0 flex items-center justify-center bg-[#f9f9f9] ${vertical ? 'h-[13px]' : 'w-[13px]'}`}>
                <svg width="8" height="8" viewBox="0 0 8 8"><path d={vertical ? 'M0 6.500h8L4 1.500z' : 'M6.500 0v8L1.500 4z'} fill="#777" /></svg>
            </button>
            <i style={{ flexGrow: before }} />
            <i style={{ flexGrow: thumb }} className={`bg-[#f9f9f9] border-[#c2bfbb] ${vertical ? 'border-y' : 'border-x'}`} />
            <i style={{ flexGrow: after }} />
            <button aria-label="Scroll on" className={`shrink-0 flex items-center justify-center bg-[#f9f9f9] border-[#c2bfbb] ${vertical ? 'h-[13px] border-t' : 'w-[13px] border-l'}`}>
                <svg width="8" height="8" viewBox="0 0 8 8"><path d={vertical ? 'M0 1.500h8L4 6.500z' : 'M1.500 0v8L6.500 4z'} fill="#777" /></svg>
            </button>
        </div>
    );
}

/* ---------- board ---------- */

const traces = [
    'M1220 381.500H1378', 'M1452 381.500H1658.500V420',
    'M1175.500 382V417.500H1556L1606.500 468.500H1645',
    'M1183.500 417.500V922.500H1215',
    'M1212 495.500H1452.500V471L1460 463.500H1549.500V512.500L1558 520.500H1570',
    'M1181.500 527.500L1183.500 540L1188 544.500H1466', 'M1348.500 544.500V598',
    'M1218.500 612V596.500H1273L1281.500 605V620.500H1330', 'M1270 642.500H1330', 'M1240.500 674V828',
    'M1454 599.500H1560.500V684L1582 704', 'M1454 620.500H1501.500V904', 'M1454 642.500H1468.500V912L1464 917',
    'M1365 664.500H1378.500V785.500L1336 828', 'M1420 707.500H1395.500V818L1341 872', 'M1432 731L1411.500 752.500V848L1341 915',
    'M1572 547L1587.500 561.500V648', 'M1587.500 582.500H1413L1406.500 590V685.500H1420',
    'M1345 731L1267.500 806.500V853L1247 872',
    'M1580 479.500H1596L1603 485.500H1631L1637 490.500H1688.500V448', 'M1666 428L1687.500 449L1711.500 425.500H1761.500V622.500L1680 704',
    'M1580 501.500H1602L1608 506.500H1731.500V456', 'M1580 523.500H1674.500V648',
    'M1213 840.500H1199.500V895L1208 903.500H1294.500V942L1311 957.500H1522.500V898L1527.500 892.500H1631.500',
    'M1242 934L1284 973.500H1544.500V945', 'M1600 713.500H1662M1631.500 713.500V904',
];

const icRows = [599, 620, 642, 664, 685, 707, 729];
const u1Rows = [479, 501, 523, 544];

// x, y, w, h
const pads: number[][] = [
    [1374, 365, 23, 33], [1431, 365, 23, 33],
    [1641, 415, 35, 17], [1641, 462, 35, 17], [1717, 436, 35, 23],
    [1210, 609, 15, 67], [1233, 609, 15, 67], [1256, 609, 15, 67],
    ...icRows.flatMap((y) => [[1328, y - 5, 39, 11], [1417, y - 5, 39, 11]]),
    ...u1Rows.flatMap((y) => [[1464, y - 5, 21, 11], [1560, y - 5, 21, 11]]),
    ...[826, 870, 913].flatMap((y) => [[1211, y, 45, 23], [1305, y, 45, 23]]),
    ...[1403, 1446, 1490, 1533, 1576, 1620].map((x) => [x, 902, 23, 45]),
    [1658, 646, 33, 23], [1658, 703, 33, 23],
];

// silkscreen areas that lie below the copper
const stops: number[][] = [
    ...icRows.flatMap((y) => [[1343, y - 3, 22, 7], [1423, y - 3, 19, 7]]),
    ...u1Rows.flatMap((y) => [[1466, y - 4, 19, 9], [1560, y - 4, 20, 9]]),
    [1651, 418, 15, 11], [1651, 465, 15, 11], [1726, 438, 16, 19],
];

const cross = (x: number, y: number, r: number) => `M${x - r} ${y}h${2 * r}M${x} ${y - r}v${2 * r}`;

function Board() {
    return (
        <svg viewBox="545 193 1361 848" className="size-full" fill="none" aria-label="Board layout">
            <g stroke="#a5a5a8" strokeWidth="2.500">
                <circle cx="1196" cy="381" r="46" strokeWidth="2" />
                <circle cx="1196" cy="381" r="41" strokeWidth="5" />
                <circle cx="1196" cy="381" r="30" />
                <path d="M1159 334.500l9 9-10 9-9-9z" />
                <path d="M1180 381a17 17 0 0 1 17-17M1186 381a11 11 0 0 1 11-10M1213 381a17 17 0 0 1-17 17.500M1207 381a11 11 0 0 1-12 11" />
                <circle cx="1196" cy="511" r="46" />
                <circle cx="1196" cy="511.500" r="37" />
                <path d="M1164 512.500a32 32 0 0 1 33-33M1175 512.500a21 21 0 0 1 22-22M1229 511a32 32 0 0 1-33 32M1218 511a21 21 0 0 1-22 21.500M1242 503.500h16.500v17.500H1242z" />
                <path d="M1379 364.500h70.500v34.500h-70.500z" strokeWidth="3" />
                <path d="M1361.500 591.500h62v146h-62z" strokeWidth="3" />
                <circle cx="1379" cy="604" r="9" />
                <path d="M1495 465h55l6 6v81l-6 6h-16.500a11 11 0 0 0-22 0H1495l-6-6v-81z" strokeWidth="4" />
                <circle cx="1563.500" cy="564" r="5.500" fill="#a5a5a8" stroke="none" />
                <path d="M1664 415.500h64v63h-64z" stroke="#cdcabb" strokeWidth="4" />
                <path d="M1657.500 651h35v71h-35z" strokeWidth="3" />
                <path d="M1570.500 650.500h35v71.500h-35z" stroke="#f2f2f0" strokeWidth="3" />
            </g>

            <g fill="#a5a5a8" fontFamily="'Liberation Sans', sans-serif" fontSize="30">
                {stops.map(([x, y, w, h]) => <rect key={`${x}-${y}`} x={x} y={y} width={w} height={h} />)}
                <text x="1174" y="328">D1</text>
                <text x="1174" y="454">SFH482</text>
                <text x="1049" y="501">BPX65</text>
                <text x="1104" y="534">D2</text>
                <text x="1668" y="409">R3</text>
                <text x="1357" y="586">IC1</text>
                <text x="1174" y="815">AVRISPSMD</text>
                <text x="1467" y="891">U$2</text>
                <text x="1293" y="967">U$1</text>
                <text x="1353" y="946">1</text>
                <text transform="translate(1423 851) rotate(-90)">ATTINY44-SSU</text>
                <text transform="translate(1713 686) rotate(-90)" fontSize="24">R2</text>
                <g fontFamily="'Liberation Mono', monospace" fontWeight="bold" fontSize="15">
                    <text x="1495" y="457">LMV358</text>
                    <text x="1513" y="576">U1</text>
                </g>
                <g fill="#f2f2f0" fontSize="24">
                    <text transform="translate(1565 800) rotate(-90)">LEDFAB1206</text>
                    <text transform="translate(1626 699) rotate(-90)">U$3</text>
                </g>
            </g>

            <g opacity="0.800">
                <path d={traces.join('')} stroke="#ce0d0f" strokeWidth="7" strokeLinejoin="round" />
                {pads.map(([x, y, w, h]) => <rect key={`${x}-${y}`} x={x} y={y} width={w} height={h} fill="#ce0d0f" />)}
            </g>
            <path d="M1571 646h33v23h-33zM1571 703h33v23h-33z" fill="#ff2f0a" />

            <g fill="#41de9a" opacity="0.800">
                <rect x="1164" y="359" width="23" height="45" rx="9" />
                <rect x="1207" y="359" width="23" height="45" rx="9" />
                <path d="M1207.500 485h9.500l7 7v9.500l-7 7h-9.500l-7-7V492zM1176.500 516h9.500l7 7v9.500l-7 7h-9.500l-7-7V523z" />
            </g>
            <g fill="#020003">
                <circle cx="1175.500" cy="381.500" r="6.500" />
                <circle cx="1218.500" cy="381.500" r="6.500" />
                <circle cx="1212.500" cy="496.500" r="6.500" />
                <circle cx="1181.500" cy="527.500" r="6.500" />
            </g>
            <path d="M1175.500 378v10M1216 381.500h9M1210 496h9M1182 522v11" stroke="#a50a0c" strokeWidth="7" />

            <path
                d={[[1175.5, 329.5], [1175.5, 455.5], [1142.5, 479.5], [1142.5, 512.5], [1357.5, 587.5], [1669.5, 409.5], [1522.5, 450.5], [1522.5, 569.5], [1402.5, 642.5], [1348.5, 794.5], [1348.5, 946.5], [1468.5, 892.5], [1696.5, 655.5]].map(([x, y]) => cross(x, y, 9)).join('')}
                stroke="#a5a5a8"
            />
            <path d={cross(1548.5, 655.5, 9) + cross(1609.5, 655.5, 9)} stroke="#f2f2f0" />
            <path
                d={cross(1196.5, 381.5, 15) + cross(1196.5, 512.5, 10) + cross(1414.5, 381.5, 17) + cross(1522.5, 512.5, 12) + cross(1696.5, 447.5, 10) + cross(1392.5, 664.5, 13) + cross(1283.5, 881.5, 18) + cross(1674.5, 685.5, 7)}
                stroke="#98a82c"
            />
            <path d={cross(1587.5, 685.5, 10)} stroke="#b4ee00" />
            <path d={cross(1240.5, 642.5, 7) + cross(1522.5, 924.5, 9)} stroke="#c03a14" />
        </svg>
    );
}

const drawers = [
    { label: 'MANUFACTURING', color: '#1f8a4c', mark: 'M4 4h6v6H4zM4 2h2M8 2h2M4 12h2M8 12h2' },
    { label: 'FUSION 360', color: '#f0961e', mark: 'M5 12V3h5M5 7h4' },
    { label: 'FUSION TEAM', color: '#f0961e', mark: 'M5 12V3h5M5 7h4' },
];

function BoardView() {
    return (
        <main className="flex-1 min-w-0 flex flex-col">
            <div className="h-[34px] shrink-0 flex items-center pl-[7px] pr-[5px]">
                <label htmlFor="cmd" className="w-[163px] pt-px">50 mil (4052 2254)</label>
                <div className="flex-1 h-[26px] flex items-center bg-[#dad8d9] border border-[#999]">
                    <input id="cmd" placeholder="Click or press Ctrl+L key to activate command line mode" className="flex-1 pl-[6px] pt-px outline-none placeholder:text-[#8c8c8c]" />
                    <Caret className="mr-1" />
                </div>
            </div>
            <div className="flex-1 min-h-0 flex">
                <div className="flex-1 min-w-0 flex flex-col">
                    <div className="relative flex-1 min-h-0 bg-[#020003]">
                        <Board />
                        <div className="absolute top-[15px] right-1 flex flex-col gap-[27px]">
                            {drawers.map((d) => (
                                <button key={d.label} className="w-[25px] h-[135px] flex flex-col items-center justify-center gap-[6px] bg-[#44443d] text-white">
                                    <svg width="15" height="15" viewBox="0 0 14 14" aria-hidden="true">
                                        <rect width="14" height="14" rx="1" fill={d.color} />
                                        <path d={d.mark} fill="none" stroke="#fff3a0" strokeWidth="1.500" />
                                    </svg>
                                    <span className="[writing-mode:vertical-rl] text-[10px] font-bold leading-none">{d.label}</span>
                                </button>
                            ))}
                        </div>
                    </div>
                    <ScrollBar before={571} thumb={508} after={256} />
                </div>
                <div className="flex flex-col">
                    <div className="flex-1 flex"><ScrollBar before={76} thumb={392} after={353} vertical /></div>
                    <i className="h-[14px]" />
                </div>
            </div>
        </main>
    );
}

export default function App() {
    return (
        <div className="h-screen flex flex-col overflow-hidden font-['DejaVu_Sans',sans-serif] text-xs text-[#3c3c3c]">
            <TopBar />
            <div className="flex-1 min-h-0 flex">
                <Launcher />
                <div className="flex-1 min-w-0 flex flex-col bg-[#ebebe6]">
                    <TitleBar />
                    <MenuBar />
                    <MainToolbar />
                    <LayerBar />
                    <div className="flex-1 min-h-0 flex">
                        <SideTools />
                        <DesignManager />
                        <Splitter vertical />
                        <BoardView />
                    </div>
                    <footer className="h-[25px] shrink-0 flex items-center justify-between pl-[2px] pr-[28px] pt-px border-t border-[#888]">
                        <span>'/home/amal/Desktop/week 12/output borard.brd' saved. Left-click &amp; drag to define group (or left-click to start defining a group polygon)</span>
                        <svg width="18" height="18" viewBox="0 0 18 18" aria-hidden="true"><path d="M13 0L0 10h7l-4 8L18 7h-7z" fill={GREEN} /></svg>
                    </footer>
                </div>
            </div>
        </div>
    );
}
